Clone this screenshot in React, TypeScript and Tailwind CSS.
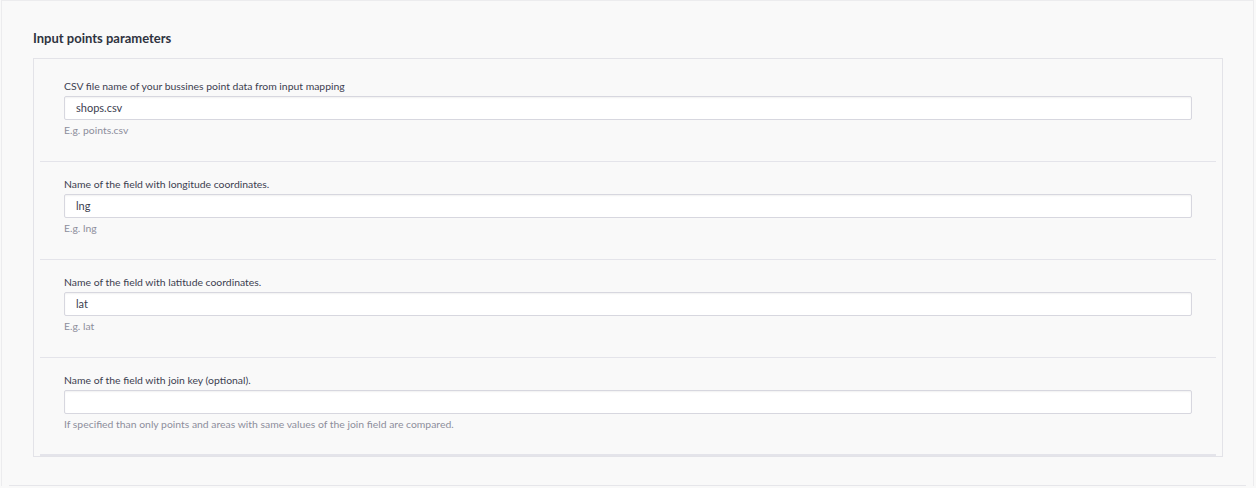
import React from "react";

const rows = [
  { label: "CSV file name of your bussines point data from input mapping", value: "shops.csv", help: "E.g. points.csv" },
  { label: "Name of the field with longitude coordinates.", value: "lng", help: "E.g. lng" },
  { label: "Name of the field with latitude coordinates.", value: "lat", help: "E.g. lat" },
  { label: "Name of the field with join key (optional).", value: "", help: "If specified than only points and areas with same values of the join field are compared." },
];

export default function App() {
  return (
    <div className="w-[1256px] h-[488px] bg-[#f9f9f9]" style={{ fontFamily: "Lato, 'Noto Sans', sans-serif" }}>
      <div className="ml-[1px] w-[1253px] border-x border-t border-[#ececee] bg-[#f9f9f9] px-[31px] pt-[29px]">
        <h2 className="text-[13px] leading-[16px] font-bold text-[#2f3340]">Input points parameters</h2>
        <div className="mt-[12px] w-[1190px] border border-[#e3e3e8] pt-[5px]">
          {rows.map((r, i) => (
            <div key={i} className={`mx-[6px] px-[24px] pt-[15px] ${i < rows.length - 1 ? "pb-[24px] border-b border-[#e4e4ea]" : "pb-[23px] border-b-2 border-[#e4e4ea]"}`}>
              <div className="text-[10.4px] leading-[14px] text-[#3c4050] mb-[3px]">{r.label}</div>
              <div className="h-[24px] w-full bg-white border border-[#d7d7df] rounded-[2px] shadow-[inset_0_1px_2px_rgba(0,0,0,0.06)] pl-[11px] flex items-center text-[11px] text-[#3c4050]">
                {r.value}
              </div>
              <div className="mt-[3px] text-[10.4px] leading-[14px] text-[#8d8e9c]">{r.help}</div>
            </div>
          ))}
        </div>
        <div className="h-[28px]" />
        <div className="mx-[-24px] border-b border-[#e6e6ea]" />
      </div>
    </div>
  );
}
